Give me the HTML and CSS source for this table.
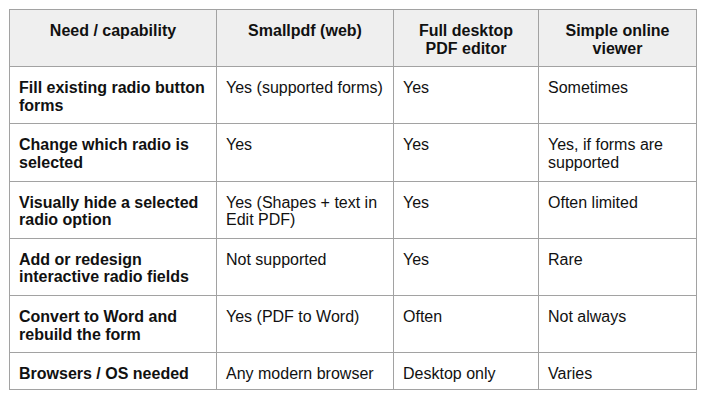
FILE: index.html
```html
<!DOCTYPE html>
<html>
<head>
<meta charset="utf-8">
<link rel="stylesheet" href="styles.css">
</head>
<body>
<div class="wrap">
<table class="grid">
  <colgroup>
    <col class="c1"><col class="c2"><col class="c3"><col class="c4">
  </colgroup>
  <thead>
    <tr>
      <th>Need / capability</th>
      <th>Smallpdf (web)</th>
      <th>Full desktop PDF editor</th>
      <th>Simple online viewer</th>
    </tr>
  </thead>
  <tbody>
    <tr>
      <td class="need">Fill existing radio button forms</td>
      <td>Yes (supported forms)</td>
      <td>Yes</td>
      <td>Sometimes</td>
    </tr>
    <tr>
      <td class="need">Change which radio is selected</td>
      <td>Yes</td>
      <td>Yes</td>
      <td>Yes, if forms are supported</td>
    </tr>
    <tr>
      <td class="need">Visually hide a selected radio option</td>
      <td>Yes (Shapes + text in Edit PDF)</td>
      <td>Yes</td>
      <td>Often limited</td>
    </tr>
    <tr>
      <td class="need">Add or redesign interactive radio fields</td>
      <td>Not supported</td>
      <td>Yes</td>
      <td>Rare</td>
    </tr>
    <tr>
      <td class="need">Convert to Word and rebuild the form</td>
      <td>Yes (PDF to Word)</td>
      <td>Often</td>
      <td>Not always</td>
    </tr>
    <tr class="last">
      <td class="need">Browsers / OS needed</td>
      <td>Any modern browser</td>
      <td>Desktop only</td>
      <td>Varies</td>
    </tr>
  </tbody>
</table>
</div>
</body>
</html>
```

FILE: styles.css
```css
html, body {
  margin: 0;
  padding: 0;
  background: #ffffff;
}

.wrap {
  padding: 9px;
}

.grid {
  border-collapse: collapse;
  table-layout: fixed;
  width: 687px;
  font-family: "Liberation Sans", Arial, sans-serif;
  font-size: 16px;
  line-height: 17.6px;
  color: #111111;
}

.c1 { width: 207px; }
.c2 { width: 177px; }
.c3 { width: 145px; }
.c4 { width: 158px; }

.grid th,
.grid td {
  border: 1px solid #a2a2a2;
  padding: 12px 9px 9px;
  vertical-align: top;
  text-align: left;
}

.grid th {
  background: #efefef;
  font-weight: bold;
  text-align: center;
  padding-left: 14px;
  padding-right: 14px;
}

.grid td.need {
  font-weight: bold;
}

.grid tr.last td {
  padding-bottom: 6px;
}
```
